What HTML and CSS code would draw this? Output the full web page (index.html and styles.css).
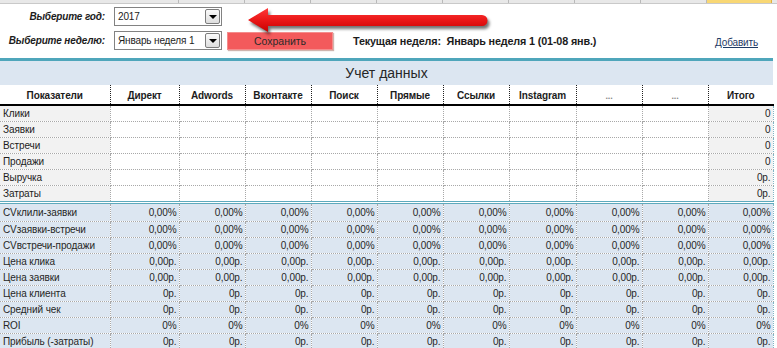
FILE: index.html
```html
<!DOCTYPE html>
<html lang="ru">
<head>
  <meta charset="UTF-8">
  <title>Учет данных</title>
  <link rel="stylesheet" href="styles.css">
</head>
<body>

  <div class="sheet-strip">
    <span class="strip-cell strip-wide"></span>
    <span class="strip-cell"></span>
    <span class="strip-cell"></span>
    <span class="strip-cell"></span>
    <span class="strip-cell"></span>
    <span class="strip-cell"></span>
    <span class="strip-cell"></span>
    <span class="strip-cell"></span>
    <span class="strip-cell"></span>
    <span class="strip-cell strip-active"></span>
  </div>

  <div class="controls">
    <div class="ctl-row">
      <span class="ctl-label">Выберите год:</span>
      <div class="combo">
        <span class="combo-value">2017</span>
        <span class="combo-btn"></span>
      </div>
    </div>
    <div class="ctl-row">
      <span class="ctl-label">Выберите неделю:</span>
      <div class="combo">
        <span class="combo-value">Январь неделя 1</span>
        <span class="combo-btn"></span>
      </div>
      <button class="save-btn">Сохранить</button>
      <span class="current-week">Текущая неделя:&nbsp; Январь неделя 1 (01-08 янв.)</span>
      <a class="add-link" href="#">Добавить</a>
    </div>

    <svg class="hint-arrow" width="260" height="36" viewBox="0 0 260 36">
      <defs>
        <linearGradient id="arrowFill" x1="0" y1="0" x2="0" y2="1">
          <stop offset="0" stop-color="#ff3a3a"/>
          <stop offset="0.5" stop-color="#ea1717"/>
          <stop offset="1" stop-color="#c80000"/>
        </linearGradient>
      </defs>
      <path d="M8,17 L28,5 L28,12 L242,12 A5.5,5.5 0 0 1 242,23 L28,23 L28,29 Z" fill="url(#arrowFill)"/>
    </svg>
  </div>

  <div class="report">
    <div class="report-title">Учет данных</div>
    <table class="grid">
      <colgroup>
        <col style="width:110px">
        <col style="width:69px">
        <col style="width:66px">
        <col style="width:66px">
        <col style="width:66px">
        <col style="width:66px">
        <col style="width:66px">
        <col style="width:67px">
        <col style="width:66px">
        <col style="width:66px">
        <col style="width:65px">
      </colgroup>
      <thead>
        <tr>
          <th>Показатели</th>
          <th>Директ</th>
          <th>Adwords</th>
          <th>Вконтакте</th>
          <th>Поиск</th>
          <th>Прямые</th>
          <th>Ссылки</th>
          <th>Instagram</th>
          <th class="th-muted">...</th>
          <th class="th-muted">...</th>
          <th>Итого</th>
        </tr>
      </thead>
      <tbody class="inputs">
        <tr><td class="label">Клики</td><td></td><td></td><td></td><td></td><td></td><td></td><td></td><td></td><td></td><td class="total">0</td></tr>
        <tr><td class="label">Заявки</td><td></td><td></td><td></td><td></td><td></td><td></td><td></td><td></td><td></td><td class="total">0</td></tr>
        <tr><td class="label">Встречи</td><td></td><td></td><td></td><td></td><td></td><td></td><td></td><td></td><td></td><td class="total">0</td></tr>
        <tr><td class="label">Продажи</td><td></td><td></td><td></td><td></td><td></td><td></td><td></td><td></td><td></td><td class="total">0</td></tr>
        <tr><td class="label">Выручка</td><td></td><td></td><td></td><td></td><td></td><td></td><td></td><td></td><td></td><td class="total">0р.</td></tr>
        <tr><td class="label">Затраты</td><td></td><td></td><td></td><td></td><td></td><td></td><td></td><td></td><td></td><td class="total">0р.</td></tr>
      </tbody>
      <tbody class="calc">
        <tr><td class="label">CVклили-заявки</td><td>0,00%</td><td>0,00%</td><td>0,00%</td><td>0,00%</td><td>0,00%</td><td>0,00%</td><td>0,00%</td><td>0,00%</td><td>0,00%</td><td>0,00%</td></tr>
        <tr><td class="label">CVзаявки-встречи</td><td>0,00%</td><td>0,00%</td><td>0,00%</td><td>0,00%</td><td>0,00%</td><td>0,00%</td><td>0,00%</td><td>0,00%</td><td>0,00%</td><td>0,00%</td></tr>
        <tr><td class="label">CVвстречи-продажи</td><td>0,00%</td><td>0,00%</td><td>0,00%</td><td>0,00%</td><td>0,00%</td><td>0,00%</td><td>0,00%</td><td>0,00%</td><td>0,00%</td><td>0,00%</td></tr>
        <tr><td class="label">Цена клика</td><td>0,00р.</td><td>0,00р.</td><td>0,00р.</td><td>0,00р.</td><td>0,00р.</td><td>0,00р.</td><td>0,00р.</td><td>0,00р.</td><td>0,00р.</td><td>0,00р.</td></tr>
        <tr><td class="label">Цена заявки</td><td>0,00р.</td><td>0,00р.</td><td>0,00р.</td><td>0,00р.</td><td>0,00р.</td><td>0,00р.</td><td>0,00р.</td><td>0,00р.</td><td>0,00р.</td><td>0,00р.</td></tr>
        <tr><td class="label">Цена клиента</td><td>0р.</td><td>0р.</td><td>0р.</td><td>0р.</td><td>0р.</td><td>0р.</td><td>0р.</td><td>0р.</td><td>0р.</td><td>0р.</td></tr>
        <tr><td class="label">Средний чек</td><td>0р.</td><td>0р.</td><td>0р.</td><td>0р.</td><td>0р.</td><td>0р.</td><td>0р.</td><td>0р.</td><td>0р.</td><td>0р.</td></tr>
        <tr><td class="label">ROI</td><td>0%</td><td>0%</td><td>0%</td><td>0%</td><td>0%</td><td>0%</td><td>0%</td><td>0%</td><td>0%</td><td>0%</td></tr>
        <tr><td class="label">Прибыль (-затраты)</td><td>0р.</td><td>0р.</td><td>0р.</td><td>0р.</td><td>0р.</td><td>0р.</td><td>0р.</td><td>0р.</td><td>0р.</td><td>0р.</td></tr>
      </tbody>
    </table>
  </div>

</body>
</html>
```

FILE: styles.css
```css
* {
  box-sizing: border-box;
}
body {
  margin: 0;
  padding: 0;
  background: #fff;
  font-family: "Liberation Sans", Arial, sans-serif;
  font-size: 10.5px;
  letter-spacing: -0.15px;
  color: #1c1c1c;
  overflow: hidden;
}

/* excel column header strip */
.sheet-strip {
  display: grid;
  grid-template-columns: 179px repeat(8, 66px) 65px;
  height: 4px;
  background: #e8e8e8;
  border-bottom: 1px solid #c9c9c9;
}
.strip-cell {
  border-right: 1px solid #b9b9b9;
}
.strip-active {
  background: #f8d774;
  border-right: 1px solid #e0b040;
}

/* selectors */
.controls {
  position: relative;
  height: 54px;
  padding-top: 3px;
}
.ctl-row {
  display: flex;
  align-items: center;
  height: 19px;
  margin-bottom: 5px;
}
.ctl-label {
  flex-shrink: 0;
  width: 105px;
  white-space: nowrap;
  text-align: right;
  font-size: 10px;
  font-weight: bold;
  font-style: italic;
  margin-right: 9px;
}
.combo {
  flex-shrink: 0;
  width: 108px;
  height: 19px;
  border: 1px solid #828282;
  display: flex;
  align-items: center;
  justify-content: space-between;
  padding: 0 1px 0 3px;
  background: #fff;
  font-size: 10px;
  white-space: nowrap;
}
.combo-btn {
  flex-shrink: 0;
  width: 15px;
  height: 15px;
  border: 1px solid #7c7c7c;
  border-radius: 2px;
  background: linear-gradient(#fafafa, #dedede);
  display: flex;
  align-items: center;
  justify-content: center;
}
.combo-btn:after {
  content: "";
  border-left: 4px solid transparent;
  border-right: 4px solid transparent;
  border-top: 4px solid #000;
}
.save-btn {
  flex-shrink: 0;
  width: 106px;
  height: 18px;
  margin-left: 5px;
  border: 1px solid #f48c8c;
  background: #f35a5c;
  box-shadow: 1px 1px 1px rgba(120, 40, 20, 0.35);
  font-family: inherit;
  font-size: 10.5px;
  color: #2a2a2a;
  padding: 0;
}
.current-week {
  margin-left: 20px;
  font-weight: bold;
  font-size: 10.8px;
  white-space: nowrap;
}
.add-link {
  margin-left: auto;
  margin-right: 19px;
  margin-top: 4px;
  font-size: 10px;
  color: #1f3b66;
}
.hint-arrow {
  position: absolute;
  left: 240px;
  top: -1px;
  filter: drop-shadow(2px 3px 1.5px rgba(0, 0, 0, 0.55));
}

/* report */
.report {
  width: 773px;
  border-top: 3px solid #4fa6bb;
}
.report-title {
  height: 24px;
  background: #dce6f1;
  text-align: center;
  font-size: 14px;
  letter-spacing: 0;
  line-height: 24px;
  color: #262626;
}
.grid {
  width: 773px;
  table-layout: fixed;
  border-collapse: collapse;
  font-size: 10px;
  letter-spacing: -0.1px;
}
.grid th {
  height: 20px;
  padding: 2px 0 0;
  font-weight: bold;
  text-align: center;
  border-left: 1px dotted #222;
  border-bottom: 2px solid #000;
  background: #fff;
}
.grid th:first-child {
  border-left: none;
}
.grid th.th-muted {
  color: #8a8a8a;
  font-size: 9px;
}
.grid td {
  height: 16.2px;
  padding: 0 2px 0 0;
  text-align: right;
  white-space: nowrap;
  overflow: hidden;
  border: 1px dotted #a8a8a8;
}
.grid td:first-child {
  border-left: none;
}
.grid td:last-child {
  border-right: 1px dotted #7fb4c4;
}
.grid td.label {
  text-align: left;
  padding-left: 3px;
}
.inputs td.label,
.inputs td.total {
  background: #f2f2f2;
}
.inputs tr:first-child td {
  border-top: none;
}
.calc td {
  height: 16.1px;
  background: #dce6f1;
  color: #262626;
}
.calc tr:first-child td {
  height: 19px;
  border-top: 3px double #5eaabd;
}
```
